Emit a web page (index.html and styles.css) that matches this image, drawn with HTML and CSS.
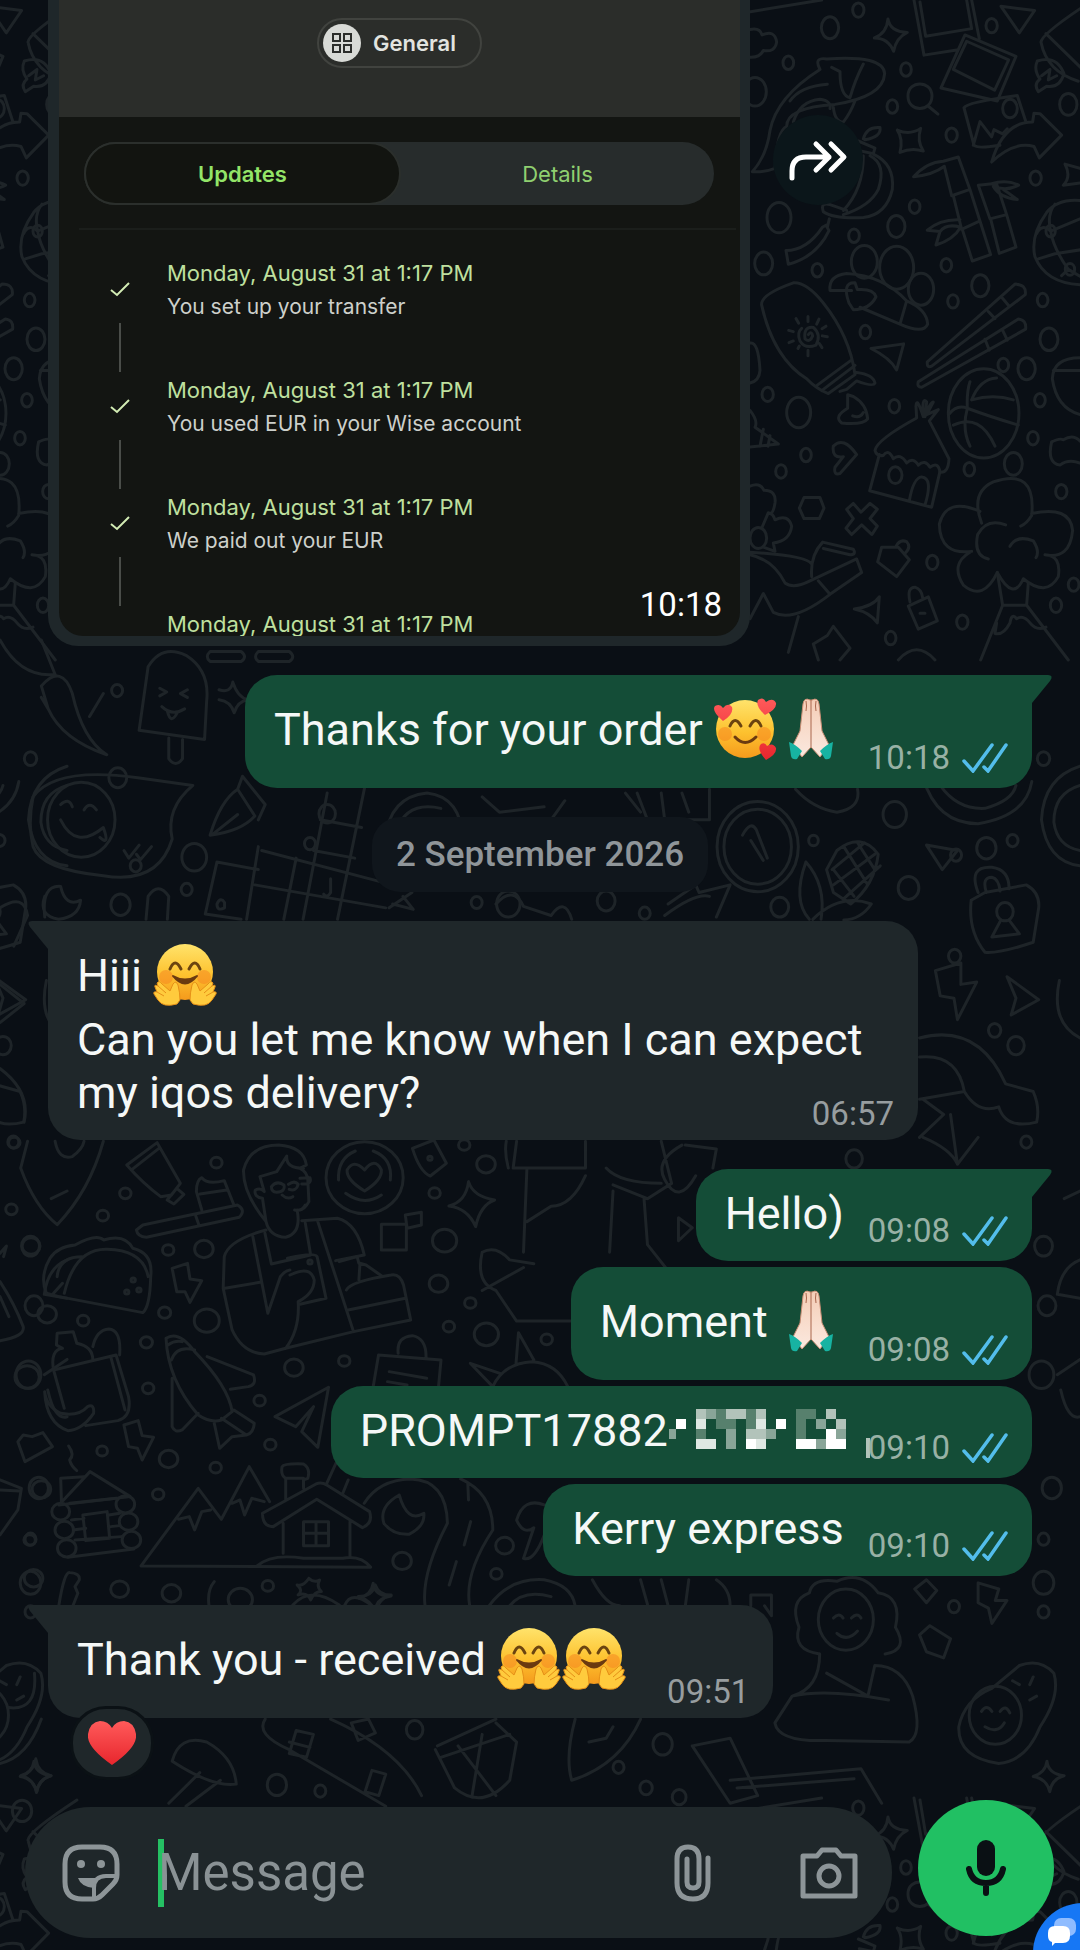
FILE: index.html
```html
<!DOCTYPE html>
<html lang="en">
<head>
  <meta charset="UTF-8">
  <title>Chat</title>
  <meta name="viewport" content="width=device-width, initial-scale=1.0">
  <link rel="stylesheet" href="styles.css">
</head>
<body>

  <!-- Wallpaper: one tile, repeated -->
  <svg class="wallpaper" aria-hidden="true">
    <defs>
      <g id="tile">
        <g transform="translate(740 0) scale(.3333 .4209)">
          <circle cx="355" cy="24" r="17"/><circle cx="270" cy="66" r="26"/><circle cx="145" cy="149" r="16"/><circle cx="45" cy="218" r="34"/>
          <circle cx="498" cy="165" r="16"/><circle cx="457" cy="253" r="16"/><circle cx="755" cy="61" r="17"/><circle cx="635" cy="321" r="17"/>
          <circle cx="985" cy="248" r="26"/><circle cx="887" cy="423" r="17"/><circle cx="524" cy="491" r="16"/><circle cx="469" cy="538" r="26"/>
          <circle cx="342" cy="560" r="16"/><circle cx="117" cy="517" r="36"/><circle cx="71" cy="626" r="27"/><circle cx="232" cy="642" r="16"/>
          <circle cx="373" cy="622" r="39"/><circle cx="470" cy="636" r="51"/><circle cx="543" cy="687" r="38"/><circle cx="619" cy="630" r="16"/>
          <circle cx="721" cy="679" r="26"/><circle cx="639" cy="716" r="16"/><circle cx="376" cy="789" r="16"/><circle cx="908" cy="713" r="16"/>
          <circle cx="927" cy="806" r="27"/><circle cx="860" cy="876" r="26"/><circle cx="790" cy="867" r="16"/><circle cx="900" cy="951" r="16"/>
          <circle cx="83" cy="937" r="17"/><circle cx="176" cy="980" r="36"/><circle cx="463" cy="965" r="16"/><circle cx="198" cy="1081" r="16"/>
          <circle cx="123" cy="1120" r="16"/><circle cx="466" cy="1129" r="20"/><circle cx="688" cy="1115" r="16"/><circle cx="820" cy="1102" r="27"/>
          <circle cx="879" cy="1041" r="16"/><circle cx="964" cy="1168" r="17"/><circle cx="577" cy="1336" r="17"/><circle cx="667" cy="1478" r="17"/>
          <circle cx="948" cy="1438" r="17"/><circle cx="1001" cy="1389" r="16"/><circle cx="452" cy="1516" r="16"/>
          <path d="M0 32L245 0M30 70Q60 65 66 83Q105 70 110 100Q105 125 70 120Q60 137 30 136"/>
          <path d="M444 45Q450 75 502 77Q468 90 461 122Q445 90 403 90Q440 80 444 45ZM783 15L884 25L838 78Z"/>
          <path d="M522 0L552 131L650 119M540 5L557 86L695 68L680 0M695 0L718 92M675 83L828 134L772 240L603 209ZM680 98L806 142L764 214L640 165Z"/>
          <path d="M672 256Q680 243 832 227L858 290M672 256L702 345Q710 354 780 345M700 345L720 289L755 325L762 308L788 318L802 306"/><circle cx="810" cy="258" r="22"/>
          <path d="M755 385Q790 290 878 290L882 269L900 270L965 321L898 375L882 348Q820 335 755 385Z"/>
          <path d="M903 100Q905 80 1050 5M918 80L1050 182M903 100Q920 170 1015 193M892 145Q950 130 972 175Q960 210 920 205L895 218Q880 200 900 188Q880 165 892 145M905 180L930 165L925 190L950 180"/>
          <path d="M504 228C504 190 575 190 576 228C575 268 504 268 504 228M566 253L594 271M472 309Q510 322 542 305Q530 335 550 359Q515 350 480 362Q490 330 472 309"/>
          <path d="M37 408Q80 370 90 310Q110 230 240 165Q220 135 260 140Q430 130 434 175Q430 230 285 248Q140 255 140 300Q110 310 105 400Q70 410 37 408M150 240Q180 205 262 200M275 160L300 170Q300 228 330 232Q345 190 370 152M280 255Q285 290 310 290Q330 270 345 240"/>
          <path d="M160 290Q180 240 240 236Q275 240 270 258M370 330Q380 300 420 303Q425 325 375 332M355 335L405 352L400 365L358 358M370 370Q370 450 310 500M390 370Q440 390 415 450Q390 490 310 510M400 366Q465 390 457 450Q440 510 370 517Q280 520 250 503Q240 480 270 486L320 500"/>
          <path d="M138 595Q200 595 247 540L258 535L267 548Q230 610 145 628ZM268 520L262 540"/>
          <path d="M521 420Q560 385 610 383L655 373L690 450L635 465L613 395Q580 415 521 420M690 450L720 525L665 545L640 465M720 525L752 605L697 620L667 545M562 547Q600 520 660 522M600 550Q620 530 662 540Q640 570 588 582L600 550L562 547"/>
          <path d="M715 440L750 437L770 437L800 510L750 520ZM800 510L828 587L778 602L752 520M752 437Q800 425 836 440Q800 455 760 443Q780 470 832 474Q800 455 790 450"/>
          <path d="M1050 480Q960 465 920 505Q870 560 885 610Q920 680 1050 677M945 485Q920 510 932 549Q940 590 985 640L1050 670M932 549Q905 530 890 555M932 549L1050 510M895 615L945 603M985 640L965 655M945 603L1050 590"/><circle cx="932" cy="549" r="14"/><circle cx="990" cy="640" r="14"/>
          <path d="M65 725Q60 700 160 672Q200 670 250 720Q330 800 345 890L265 935Q230 925 200 900Q100 850 65 725M232 915L335 855M245 928L345 868M350 885Q400 890 405 910Q400 920 350 905L320 925L300 930"/>
          <path d="M205 795Q215 785 218 798Q210 815 195 805Q190 775 220 778Q245 795 228 820Q195 830 180 810Q170 790 185 780M204 752V764M237 758L230 770M258 775L246 781M247 798L262 800M238 816L246 826M204 832V845M174 828L178 822M147 814L160 810M146 785L160 788M168 757L176 768"/>
          <path d="M335 690L270 690Q265 655 320 650Q430 655 500 715L480 770L360 730M500 715Q560 735 563 770Q550 795 480 770M327 720Q305 670 345 672L352 688Q400 685 408 705Q390 735 340 736ZM393 828L491 817L470 879Q450 850 393 828Z"/>
          <path d="M562 860L825 675Q860 675 856 700L575 870Q560 875 562 860M745 740L765 757M787 708L807 727M535 907L835 758Q860 760 857 782L545 920Q530 920 535 907M735 806L748 832M787 783L802 808"/>
          <circle cx="731" cy="982" r="106"/><path d="M690 907Q680 930 682 970Q665 1020 690 1060M682 970Q750 990 835 1010M695 950Q720 900 770 898M695 950Q760 935 820 950M626 985Q650 960 682 970M640 1010Q720 980 765 1060"/>
          <path d="M323 938L340 942Q380 960 383 995Q370 1010 305 1005Q280 990 323 970ZM338 988Q360 995 370 980M528 965Q530 940 550 990Q545 940 560 955L555 990Q570 955 580 955L560 985L595 973L568 1000L627 1090Q625 1125 600 1122Q595 1095 570 1110Q555 1090 535 1105Q520 1085 500 1100Q480 1075 460 1090Q445 1065 430 1082Q410 1085 405 1070Q410 1045 530 993Z"/>
          <path d="M418 1080L389 1166L575 1205L600 1120M508 1190Q520 1135 545 1133Q580 1135 555 1200M280 1060Q310 1035 350 1080L300 1125Q280 1130 285 1110L310 1085Q275 1090 280 1060M178 1207L192 1182L240 1182L252 1207L238 1232L192 1232Z"/>
          <path d="M320 1210L340 1196L363 1217L390 1196L412 1210L390 1232L412 1250L396 1270L365 1247L335 1270L318 1255L340 1232ZM425 1300L475 1300L508 1330L470 1370L413 1335ZM468 1298Q480 1280 500 1287Q515 1300 495 1315M343 1447Q400 1440 418 1418L412 1480Q390 1455 343 1447ZM505 1440L565 1418L592 1475L535 1495ZM510 1430Q500 1395 525 1395Q545 1400 548 1420M540 1457H555"/>
          <path d="M725 1243Q690 1170 760 1145Q890 1110 875 1225Q860 1245 842 1250M720 1215Q620 1180 598 1245Q600 1320 695 1310M875 1220Q990 1200 998 1260Q990 1330 915 1318M690 1312Q630 1340 670 1390Q730 1430 772 1360Q820 1430 850 1375Q920 1420 955 1370Q965 1320 915 1318M745 1328Q700 1320 713 1270Q740 1230 797 1247M810 1298Q830 1270 880 1285Q900 1310 888 1325"/>
          <path d="M772 1360L788 1438H860L865 1385M788 1438L722 1568M860 1438L985 1568M770 1480L765 1505Q790 1510 810 1480Q815 1455 830 1470Q850 1460 870 1480Q890 1500 918 1490"/>
          <path d="M30 815Q55 810 60 880Q58 905 30 910M30 975Q55 1000 45 1015L115 1055L30 1062M70 1020L60 1060M90 1035L84 1060M30 1155Q60 1145 72 1165Q110 1165 105 1195Q100 1220 90 1220M65 1255L85 1218Q100 1220 105 1235Q145 1220 155 1250Q150 1285 100 1290L105 1310L70 1300"/><circle cx="55" cy="1278" r="25"/>
          <path d="M30 1318Q100 1330 135 1385Q160 1400 210 1380L350 1328L365 1360L270 1412L235 1380M215 1340Q200 1320 30 1312M215 1370Q210 1320 248 1288L340 1305Q350 1318 330 1318L250 1303M270 1412Q160 1480 100 1455L70 1410L30 1470M175 1465L145 1550"/>
          <path d="M1020 850Q940 850 937 900Q950 970 1020 985M940 880H1020M935 1050Q960 1040 970 1045Q1000 1030 1020 1048M935 1050Q920 1100 960 1105Q985 1090 1020 1100M1020 400L975 390Q995 420 970 440L1020 435M220 1530L262 1510L280 1488L330 1540L300 1568M220 1530L235 1568M475 1568Q530 1520 585 1568"/>
        </g>

        <g transform="translate(0 640) scale(.6888 .7653)">
          <circle cx="170" cy="66" r="8"/><circle cx="171" cy="180" r="13"/><circle cx="282" cy="284" r="18"/><circle cx="197" cy="295" r="8"/><circle cx="271" cy="326" r="8"/>
          <circle cx="175" cy="346" r="14"/><circle cx="475" cy="227" r="12"/><circle cx="450" cy="266" r="8"/><circle cx="692" cy="343" r="8"/><circle cx="738" cy="345" r="17"/>
          <circle cx="880" cy="341" r="13"/><circle cx="936" cy="357" r="8"/><circle cx="1132" cy="349" r="13"/><circle cx="1181" cy="262" r="7"/><circle cx="1299" cy="228" r="17"/>
          <circle cx="1388" cy="281" r="8"/><circle cx="1432" cy="272" r="14"/><circle cx="1470" cy="262" r="8"/><circle cx="1319" cy="324" r="15"/><circle cx="1386" cy="413" r="9"/>
          <circle cx="1515" cy="155" r="9"/><circle cx="1444" cy="510" r="9"/><circle cx="1475" cy="530" r="12"/><circle cx="1240" cy="678" r="12"/><circle cx="1515" cy="792" r="13"/>
          <circle cx="1490" cy="656" r="8"/><circle cx="1520" cy="870" r="13"/><circle cx="1512" cy="960" r="18"/><circle cx="1527" cy="1108" r="14"/><circle cx="1515" cy="1175" r="8"/>
          <circle cx="1515" cy="1232" r="15"/><circle cx="1385" cy="1263" r="8"/><circle cx="1515" cy="1270" r="8"/><circle cx="962" cy="1443" r="14"/><circle cx="898" cy="1473" r="8"/>
          <circle cx="938" cy="1500" r="9"/><circle cx="402" cy="1496" r="14"/><circle cx="465" cy="1504" r="8"/><circle cx="602" cy="1424" r="12"/><circle cx="986" cy="1512" r="10"/><circle cx="32" cy="1530" r="14"/>
          <path d="M202 118L215 35Q235 5 270 20Q305 40 300 80L297 130L202 118M245 128V155Q255 168 265 155V130M232 63L242 68L232 73M272 65L262 70L272 75M235 87Q250 100 268 90M243 93Q248 112 258 94"/>
          <path d="M60 60Q90 30 105 70Q120 130 155 150Q90 130 70 90ZM70 90L60 75M150 70L130 100M318 65Q335 70 338 55Q345 75 360 78Q345 80 340 95Q335 80 318 78M305 15H350Q360 22 350 28H305Q297 22 305 15M375 15H420Q430 22 420 28H375Q367 22 375 15M0 0Q30 50 80 45L60 0"/>
          <path d="M48 205Q80 165 200 180L280 190Q240 220 250 260Q230 320 150 308Q60 300 48 270Q40 240 48 205"/><circle cx="118" cy="235" r="49"/><path d="M88 215Q100 205 105 218M122 222Q130 210 140 222M88 235Q110 275 150 245Q160 270 145 258M180 275L187 285L202 268M198 280L204 287L220 270"/>
          <path d="M305 255Q320 210 345 195L370 230Q350 250 305 255M310 253L345 228M345 195L352 178L385 215L375 235M560 260Q565 205 620 200Q670 205 672 262M575 250Q590 210 640 220M700 205L725 225L790 218M730 235H800L820 210"/>
          <path d="M475 200L440 365M530 190L490 365M465 235L525 245M455 275L515 285M380 275L570 320M370 320L560 350M315 290L375 300M315 290L298 358L350 365M375 270L358 365M430 285L412 365M315 345Q320 335 326 343V350Q315 355 315 345M480 312V330Q475 338 470 332M565 350L598 330M570 345L600 352L585 335"/>
          <path d="M65 335Q55 360 85 365Q115 362 117 340Q95 350 88 322Q60 320 65 362M212 365L215 335Q230 315 245 335L243 365M0 350Q35 330 40 360L20 400M0 450L35 475L0 500M0 560Q45 590 35 630M720 345Q745 320 760 348L800 360Q820 335 830 365M970 345L1010 320L1015 330L1060 320L1040 362M965 360Q1010 330 1030 335"/>
          <circle cx="1100" cy="270" r="59"/><circle cx="1100" cy="270" r="49"/><path d="M1078 255Q1090 235 1098 248L1114 285M1090 262L1108 288M908 200L930 225M925 200L940 235H1030V195M960 200L965 235M990 200L1000 225M1155 195Q1180 220 1215 225Q1250 220 1245 195M1340 180Q1360 240 1420 240Q1490 230 1498 185M1365 190Q1390 222 1430 220Q1470 210 1475 190"/>
          <path d="M1215 275Q1250 250 1275 280Q1270 320 1235 345L1210 330L1200 300ZM1225 270L1260 320M1245 265L1270 300M1210 300L1240 335M1270 280L1210 320M1255 265L1208 300M1278 295L1225 338M1170 290Q1200 320 1192 365M1170 290Q1150 340 1175 365M1180 365Q1220 330 1265 345Q1250 365 1225 366M1345 268L1390 275L1368 300Z"/>
          <path d="M1410 340L1430 330L1490 320Q1510 330 1508 350L1500 395Q1450 410 1430 408Q1405 380 1410 340M1420 330Q1405 295 1440 297Q1465 300 1465 325M1432 330Q1425 310 1440 310Q1450 312 1452 328"/><circle cx="1459" cy="355" r="12"/><path d="M1453 366L1440 388L1480 384L1465 366M1568 165Q1515 180 1512 235Q1520 290 1568 295M1568 190Q1530 200 1530 238Q1535 270 1568 275"/>
          <path d="M1358 432L1395 422V450L1418 447L1390 496L1385 468L1365 465ZM1462 440L1508 470L1468 490L1475 468ZM1538 445Q1525 500 1568 520M1335 520Q1420 500 1460 580L1500 590Q1510 610 1505 630Q1460 640 1450 610Q1420 620 1400 590L1335 600M1335 545Q1390 540 1400 590M1340 600L1370 620L1335 650M1380 620L1390 685L1420 650M1340 650Q1380 665 1390 685"/>
          <path d="M40 655L30 690Q50 740 83 764Q130 720 150 655M80 655Q85 680 105 675Q120 665 122 655M750 655L745 690H850L850 655M765 690L760 800M850 700Q830 740 800 740L765 760M700 800Q720 790 740 810L775 815M700 800Q690 840 720 850L750 890H828M760 820L700 850M880 690Q900 710 960 710M960 655L975 710L940 730L890 712M890 720L885 800M935 730L940 790L975 830M990 660Q950 680 965 705Q985 740 1010 700M995 660L1040 665L1035 690M985 755L1005 768L985 785ZM1545 730L1568 720"/>
          <path d="M1535 855Q1540 820 1568 810M1535 855L1568 860M1535 960L1568 940M1540 980Q1550 1020 1568 1015M735 655Q732 670 738 690"/>
          <path d="M500 1262Q510 1240 540 1262M545 1235Q540 1250 520 1250Q540 1255 545 1270Q550 1252 568 1248Q550 1248 545 1235M710 1262Q740 1225 790 1228Q830 1235 835 1262M740 1262Q760 1240 800 1250M790 1130Q760 1120 750 1150Q760 1170 775 1160L760 1200Q775 1205 790 1170M860 1228Q880 1262 900 1262M930 1228L940 1260M960 1228L970 1262M1000 1228L995 1262M1040 1228Q1060 1240 1060 1262M1090 1262V1248H1120V1275L1110 1262M838 915L850 950M1328 1240L1345 1228L1360 1242L1345 1258Z"/>
          <path d="M1160 1290Q1145 1255 1175 1245Q1180 1225 1215 1230Q1250 1215 1275 1245Q1310 1250 1300 1290Q1320 1320 1285 1325M1160 1290Q1150 1320 1190 1325"/><circle cx="1228" cy="1280" r="40"/><path d="M1210 1278Q1218 1270 1224 1278M1236 1278Q1245 1270 1250 1278M1215 1298Q1230 1310 1245 1295M1190 1325Q1190 1370 1150 1380L1125 1415Q1130 1440 1200 1438L1320 1440Q1340 1430 1325 1380Q1310 1340 1270 1340L1260 1380L1200 1350M1150 1380Q1200 1370 1290 1385"/>
          <path d="M1420 1232L1450 1240L1445 1255H1462L1440 1285L1435 1265L1420 1258ZM1335 1300L1350 1288L1380 1305L1370 1330L1345 1322ZM1480 1340Q1510 1330 1530 1350Q1540 1380 1510 1420Q1490 1465 1450 1468Q1390 1460 1392 1420Q1400 1385 1440 1370Z"/><circle cx="1445" cy="1405" r="38"/><path d="M1425 1400Q1432 1390 1440 1400M1452 1400Q1460 1390 1466 1402M1430 1420Q1448 1430 1458 1415M1470 1360L1480 1365M1500 1355L1495 1365M1505 1380L1495 1385"/>
          <path d="M1005 1445L1060 1435L1100 1510L1060 1520ZM1060 1490L1250 1475L1280 1520M1070 1500L1240 1488M1520 1465Q1522 1482 1545 1484Q1527 1488 1524 1505Q1520 1488 1500 1485Q1518 1480 1520 1465M52 1462Q55 1480 74 1484Q57 1488 53 1506Q48 1487 30 1484Q48 1480 52 1462M12 1395Q55 1400 50 1350M0 1468Q40 1460 60 1410"/>
          <path d="M250 1465Q260 1430 300 1440Q340 1460 343 1495Q310 1500 250 1465M290 1480L245 1520M320 1490L270 1524M385 1410Q370 1430 420 1450L560 1524M480 1410Q580 1450 612 1510M430 1425L455 1430L445 1460L420 1455ZM420 1440L450 1447M540 1477L560 1482L550 1510L530 1505ZM510 1415L535 1410L545 1428L520 1438ZM635 1445L720 1410M632 1450L660 1500Q700 1530 740 1490L750 1440L720 1415M640 1460L740 1430M665 1445L720 1510M700 1430L685 1512M835 1410Q820 1460 830 1490Q900 1470 930 1410M855 1440L880 1435L890 1420"/>
        </g>

        <g transform="translate(0 1130) scale(.3571 .3333)">
          <circle cx="40" cy="38" r="16"/><circle cx="32" cy="238" r="16"/><circle cx="351" cy="190" r="16"/><circle cx="606" cy="98" r="16"/><circle cx="288" cy="257" r="16"/><circle cx="87" cy="348" r="25"/>
          <circle cx="471" cy="360" r="16"/><circle cx="571" cy="357" r="26"/><circle cx="132" cy="553" r="26"/><circle cx="233" cy="572" r="16"/><circle cx="461" cy="548" r="17"/><circle cx="579" cy="572" r="35"/>
          <circle cx="410" cy="637" r="17"/><circle cx="76" cy="741" r="34"/><circle cx="823" cy="713" r="26"/><circle cx="964" cy="693" r="16"/><circle cx="415" cy="775" r="16"/><circle cx="727" cy="812" r="16"/>
          <circle cx="286" cy="963" r="15"/><circle cx="472" cy="987" r="26"/><circle cx="757" cy="944" r="16"/><circle cx="604" cy="1013" r="16"/><circle cx="116" cy="1078" r="26"/><circle cx="443" cy="1093" r="16"/>
          <circle cx="83" cy="1230" r="16"/><circle cx="94" cy="1345" r="26"/><circle cx="335" cy="1378" r="25"/><circle cx="480" cy="1390" r="26"/><circle cx="750" cy="1368" r="16"/><circle cx="673" cy="1409" r="34"/>
          <circle cx="1300" cy="45" r="16"/><circle cx="1361" cy="103" r="26"/><circle cx="1217" cy="189" r="16"/><circle cx="1245" cy="332" r="34"/><circle cx="1228" cy="461" r="26"/><circle cx="1317" cy="519" r="16"/>
          <circle cx="1257" cy="590" r="16"/><circle cx="1362" cy="613" r="34"/><circle cx="1531" cy="628" r="16"/><circle cx="1126" cy="1293" r="26"/><circle cx="1413" cy="1247" r="25"/><circle cx="1390" cy="1332" r="16"/>
          <path d="M355 105L440 38L505 160L480 195L450 200Q400 160 355 105M370 118L445 55M468 210L495 175L515 193L487 222ZM382 300L400 285L665 225Q690 240 670 262L410 322Q385 320 382 300M548 257L558 288M565 240L550 185Q550 150 565 143Q580 165 628 152L655 225M560 192L635 180"/>
          <path d="M745 275Q680 190 682 120Q700 45 780 45Q850 50 858 105L840 115Q860 125 862 150L865 215Q850 245 832 240Q845 310 800 322Q755 320 745 275L735 205M735 205Q710 200 715 180Q730 172 740 185L728 140L775 125L803 78Q800 115 850 115M760 170Q775 150 795 165Q800 185 775 187Q760 185 760 170M808 163Q825 150 835 163Q830 185 810 178M840 145L868 143Q875 165 845 162M790 195Q805 210 820 200M825 240Q845 245 855 225"/>
          <path d="M745 300Q640 330 628 380L625 475L650 600Q680 670 740 672L800 655L990 605L890 275M845 272L945 265Q1000 280 1020 375L940 392M630 475L728 457M708 320L750 550L785 440Q800 420 812 420M742 310L760 402L870 375L855 280M805 385Q880 365 888 380L913 505L840 523M812 435Q870 405 880 450Q880 490 835 515Q840 600 800 655"/><circle cx="868" cy="396" r="6"/>
          <path d="M970 480Q980 455 1095 435Q1120 430 1130 465L1150 570L990 605M975 540L1135 505M1005 450L1008 400L1025 405L1068 437M950 395L1000 380L1005 400M1068 283H1138V360H1068ZM1135 255L1180 247V285L1140 295Z"/>
          <circle cx="1021" cy="143" r="108"/><path d="M1021 183Q970 150 972 120Q990 85 1021 120Q1050 80 1068 120Q1070 150 1021 183M948 150Q945 85 995 63M1045 63Q1100 85 1093 150M968 190Q1020 230 1068 195M1155 55L1215 30L1250 100L1205 138Q1175 125 1155 55M1312 155Q1325 200 1385 210Q1345 225 1332 290Q1310 235 1257 228Q1305 215 1312 155"/><circle cx="1204" cy="85" r="6"/>
          <path d="M130 490Q110 440 140 385Q160 350 210 345Q270 310 290 330Q350 310 372 355Q430 370 422 440Q420 530 400 548L165 500ZM180 490Q210 355 300 358Q400 360 415 440M160 440Q165 380 230 380M150 490L175 460"/><circle cx="373" cy="450" r="6"/><circle cx="355" cy="486" r="6"/><circle cx="389" cy="480" r="6"/>
          <path d="M482 415L525 400L532 447L565 452L532 517L518 485H495ZM347 885L387 872L398 917L430 922L398 990L385 955L360 950ZM150 720L325 675L360 800Q370 860 330 872L240 887M150 720L180 835M150 720Q140 660 175 655L158 645L160 610L205 605L215 640Q260 650 260 690M260 650Q270 600 305 597Q340 600 335 675M310 680L350 840M125 785Q130 830 170 850Q220 860 245 830Q265 820 262 850Q230 900 190 902Q130 880 125 785"/>
          <path d="M465 625Q500 600 545 665Q640 770 650 845L620 870Q590 880 555 855Q470 750 465 625M480 690Q495 645 545 660M470 645Q490 630 510 635M580 680L710 735Q720 765 695 770L645 778M482 745V890Q490 910 510 900L555 850M600 880L615 955L650 920L690 915L620 865M655 840L712 880Q710 910 690 915M770 860L920 772L890 952L845 905L878 830L828 890Z"/>
          <path d="M50 935L65 915L90 920L120 908L147 950L70 995ZM192 948Q210 975 195 990Q200 1010 215 1022M165 1125L252 1025L365 1100ZM172 1115L170 1045L235 1040"/><circle cx="170" cy="1145" r="25"/><circle cx="180" cy="1200" r="26"/><circle cx="187" cy="1255" r="26"/><circle cx="351" cy="1123" r="26"/><circle cx="360" cy="1175" r="26"/><circle cx="368" cy="1230" r="26"/><path d="M195 1120L325 1105M200 1170L235 1165M205 1200L240 1195M210 1230L340 1220M190 1282L375 1257M305 1155L335 1150M310 1190L335 1187M232 1155L300 1145L307 1225L240 1232Z"/>
          <path d="M395 1308L555 1075L620 1168L698 1010L755 1115M395 1308L1038 1312Q1010 1275 960 1285H850Q760 1270 720 1308M500 1168L530 1160L545 1200L565 1145L590 1140M650 1120L672 1110L685 1155L705 1105L740 1115M735 1150L885 1062Q900 1055 915 1065L1035 1145Q1045 1180 1015 1193L887 1108L765 1190Q735 1190 735 1150ZM793 1180V1270M980 1175V1280M850 1175H920V1247H850ZM885 1175V1247M850 1210H920M800 1110V1045Q785 1035 790 1010Q795 1000 850 1002Q870 1015 862 1045L850 1050V1075M800 1045H850"/>
          <path d="M1118 1095Q1060 1130 1075 1180Q1100 1215 1145 1213Q1190 1190 1187 1150Q1140 1180 1118 1095M1045 770L1060 675L1235 690L1228 770M1115 670Q1110 620 1155 617Q1195 625 1193 685M1090 725L1195 745M1085 755L1140 765M915 1060L945 990M960 1090L975 1050M1020 1120Q1060 1050 1150 1047Q1250 1050 1253 1180Q1180 1330 1190 1425M1290 1047Q1380 1090 1380 1200Q1300 1330 1315 1425M1310 1060L1312 1110M1318 1175L1300 1245M1278 1295L1258 1365M165 1425Q180 1325 195 1328Q225 1330 222 1350L210 1370L218 1390L205 1425M585 1425Q580 1380 600 1355M820 1425Q870 1365 950 1425M865 1345Q850 1370 832 1365Q850 1380 835 1395Q860 1385 870 1410Q880 1385 900 1385Q885 1370 895 1350Q880 1360 865 1345M1045 1360Q1050 1400 1095 1398Q1060 1405 1055 1425M1045 1360Q1040 1395 1005 1405"/>
          <path d="M0 455Q40 520 65 590Q70 620 0 632M0 500L25 560M0 1050L60 1075L50 1140L0 1215M0 1080L55 1083M0 370L18 348L10 380M1380 770Q1410 700 1490 695Q1560 700 1590 770M1445 700L1452 608L1495 690M1400 730L1317 700L1380 770"/>
        </g>
      </g>
    </defs>
    <use href="#tile"/>
    <use href="#tile" x="-1013"/>
    <use href="#tile" y="1798"/>
    <use href="#tile" x="-1013" y="1798"/>
  </svg>

  <!-- Emoji and icons -->
  <svg class="sprite" aria-hidden="true">
    <defs>
      <linearGradient id="skin" x1="0" y1="0" x2="0" y2="1">
        <stop offset="0" stop-color="#ffe36b"/><stop offset=".55" stop-color="#fdc22f"/><stop offset="1" stop-color="#f59a1c"/>
      </linearGradient>
      <linearGradient id="palm" x1="0" y1="0" x2="0" y2="1">
        <stop offset="0" stop-color="#f5cdb6"/><stop offset="1" stop-color="#fbe9df"/>
      </linearGradient>
      <linearGradient id="red" x1="0" y1="0" x2="0" y2="1">
        <stop offset="0" stop-color="#ff5a5a"/><stop offset="1" stop-color="#e8262d"/>
      </linearGradient>
    </defs>
    <symbol id="hug" viewBox="0 0 64 64">
      <circle cx="32" cy="29" r="28" fill="url(#skin)"/>
      <circle cx="13" cy="34" r="7" fill="#f58220" opacity=".5"/><circle cx="51" cy="34" r="7" fill="#f58220" opacity=".5"/>
      <path d="M17 26Q22 14 28 26M36 26Q42 14 47 26" fill="none" stroke="#6b4410" stroke-width="3" stroke-linecap="round"/>
      <path d="M20 33Q32 48 44 33Q32 40 20 33Z" fill="#6b3a10" stroke="#6b3a10" stroke-width="2" stroke-linejoin="round"/>
      <path d="M24 61Q10 65 5 57L1 51Q0 48 4 49L2 44Q1 41 5 43L4 40Q6 37 9 41L17 48L20 41Q23 37 25 42Q27 50 27 57Z" fill="#ffcb3d" stroke="#e58f17" stroke-width="1"/>
      <path d="M40 61Q54 65 59 57L63 51Q64 48 60 49L62 44Q63 41 59 43L60 40Q58 37 55 41L47 48L44 41Q41 37 39 42Q37 50 37 57Z" fill="#ffcb3d" stroke="#e58f17" stroke-width="1"/>
      <path d="M4 49L11 53M5 43L13 50M60 49L53 53M59 43L51 50" stroke="#e58f17" stroke-width="1"/>
    </symbol>
    <symbol id="adore" viewBox="0 0 64 64">
      <circle cx="31" cy="32" r="29" fill="url(#skin)"/>
      <circle cx="11" cy="37" r="7" fill="#f58220" opacity=".5"/><circle cx="50" cy="37" r="7" fill="#f58220" opacity=".5"/>
      <path d="M16 29Q21 18 27 29M36 29Q42 18 47 29" fill="none" stroke="#6b4410" stroke-width="3" stroke-linecap="round"/>
      <path d="M21 40Q31 51 42 40" fill="none" stroke="#6b3a10" stroke-width="3" stroke-linecap="round"/>
      <path d="M9 24Q-3 14 1 9Q6 6 9 11Q14 5 18 10Q20 17 9 24ZM51 18Q41 9 44 3Q49 -1 52 5Q59 0 62 6Q63 12 51 18ZM52 63Q42 52 47 47Q51 45 53 49Q59 45 62 51Q63 57 52 63Z" fill="url(#red)"/>
    </symbol>
    <symbol id="pray" viewBox="0 0 64 64">
      <path d="M31 3Q25 0 24 7L21 34L14 48L23 60L32 50L41 60L50 48L43 34L40 7Q39 0 33 3Z" fill="url(#palm)" stroke="#c98e75" stroke-width="1"/>
      <path d="M32 3V50M27 4Q28 9 27 14M37 4Q36 9 37 14" fill="none" stroke="#a9664c" stroke-width="1"/>
      <path d="M10 45Q16 47 23 54L18 62Q13 63 12 59ZM54 45Q48 47 41 54L46 62Q51 63 52 59Z" fill="#17b3a2"/>
    </symbol>
    <symbol id="heart" viewBox="0 0 48 44">
      <path d="M24 44Q-2 26 0 13Q2 1 12 0Q20 0 24 7Q28 0 36 0Q46 1 48 13Q50 26 24 44Z" fill="url(#red)"/>
    </symbol>
    <symbol id="ticks" viewBox="0 0 46 30">
      <path d="M2 18L11 28L30 2M22 24L26 28L44 2" fill="none" stroke="#53bdeb" stroke-width="3.5" stroke-linecap="round"/>
    </symbol>
    <symbol id="check" viewBox="0 0 22 16">
      <path d="M2 9L8 14L20 2" fill="none" stroke="#d3ecb4" stroke-width="2"/>
    </symbol>
  </svg>

  <main class="chat">
    <div class="row">
      <figure class="bubble in media">
        <div class="photo">
          <div class="photo-head">
            <span class="category">
              <span class="category-icon">
                <svg width="20" height="20" viewBox="0 0 20 20" fill="none" stroke="#2b2d2a" stroke-width="2"><path d="M1 1H8V8H1ZM12 1H19V8H12ZM1 12H8V19H1ZM12 12H19V19H12Z"/></svg>
              </span>
              General
            </span>
          </div>
          <div class="tabs">
            <button type="button" class="tab active">Updates</button>
            <button type="button" class="tab">Details</button>
          </div>
          <ol class="timeline">
            <li><svg class="check"><use href="#check"/></svg><p class="date">Monday, August 31 at 1:17 PM</p><p>You set up your transfer</p></li>
            <li><svg class="check"><use href="#check"/></svg><p class="date">Monday, August 31 at 1:17 PM</p><p>You used EUR in your Wise account</p></li>
            <li><svg class="check"><use href="#check"/></svg><p class="date">Monday, August 31 at 1:17 PM</p><p>We paid out your EUR</p></li>
            <li><p class="date">Monday, August 31 at 1:17 PM</p></li>
          </ol>
          <time class="photo-time">10:18</time>
        </div>
      </figure>
      <button type="button" class="forward" aria-label="Forward">
        <svg width="62" height="44" viewBox="0 0 62 44" fill="none" stroke="#fff" stroke-width="5" stroke-linecap="round" stroke-linejoin="round"><path d="M5 40V33Q5 19 19 19H42M29 6L42 19L29 32M44 6L57 19L44 32"/></svg>
      </button>
    </div>

    <div class="bubble out tail">
      <p>Thanks for your order <svg class="emoji"><use href="#adore"/></svg><svg class="emoji"><use href="#pray"/></svg></p>
      <span class="meta"><time>10:18</time><svg class="ticks"><use href="#ticks"/></svg></span>
    </div>

    <div class="day">2 September 2026</div>

    <div class="bubble in tail long">
      <p>Hiii <svg class="emoji"><use href="#hug"/></svg><br>Can you let me know when I can expect my iqos delivery?</p>
      <span class="meta"><time>06:57</time></span>
    </div>

    <div class="group">
      <div class="bubble out tail">
        <p>Hello)</p>
        <span class="meta"><time>09:08</time><svg class="ticks"><use href="#ticks"/></svg></span>
      </div>
      <div class="bubble out">
        <p>Moment <svg class="emoji"><use href="#pray"/></svg></p>
        <span class="meta"><time>09:08</time><svg class="ticks"><use href="#ticks"/></svg></span>
      </div>
      <div class="bubble out">
        <p>PROMPT17882<svg class="mosaic" viewBox="0 0 202 50" shape-rendering="crispEdges">
          <path fill="#fff" d="M8 10h10v10h-10zM108 10h10v10h-10zM78 30h10v10h-10zM128 30h20v10h-20zM158 20h10v20h-10zM168 30h10v10h-10z"/>
          <path fill="#dfe8e3" d="M28 10h10v10h-10zM88 10h10v10h-10zM28 30h20v10h-20zM88 30h10v10h-10z"/>
          <path fill="#b2c3ba" d="M28 0h10v10h-10zM58 0h20v10h-20zM88 0h10v10h-10zM78 20h20v10h-20zM158 0h10v10h-10zM168 10h10v10h-10zM198 29h4v20h-4z"/>
          <path fill="#89a598" d="M38 0h10v10h-10zM58 20h10v20h-10zM98 20h10v10h-10zM148 10h10v10h-10zM148 30h10v10h-10zM1 20h7v10h-7zM168 20h10v10h-10z"/>
          <path fill="#57806d" d="M48 0h10v10h-10zM78 0h10v10h-10zM48 10h10v10h-10zM58 10h10v10h-10zM78 10h10v10h-10zM128 0h20v10h-20zM128 10h10v20h-10zM28 20h10v10h-10z"/>
        </svg></p>
        <span class="meta"><time>09:10</time><svg class="ticks"><use href="#ticks"/></svg></span>
      </div>
      <div class="bubble out">
        <p>Kerry express</p>
        <span class="meta"><time>09:10</time><svg class="ticks"><use href="#ticks"/></svg></span>
      </div>
    </div>

    <div class="bubble in tail wide">
      <p>Thank you - received <svg class="emoji"><use href="#hug"/></svg><svg class="emoji"><use href="#hug"/></svg></p>
      <span class="meta"><time>09:51</time></span>
      <span class="reaction"><svg width="48" height="44"><use href="#heart"/></svg></span>
    </div>
  </main>

  <!-- Message box -->
  <form class="composer">
    <div class="field">
      <button type="button" aria-label="Stickers">
        <svg width="58" height="58" viewBox="0 0 58 58" fill="none" stroke="#8d9598" stroke-width="5"><path d="M20 3H38Q55 3 55 20V31Q55 36 51 40L40 51Q36 55 31 55H20Q3 55 3 38V20Q3 3 20 3Z"/><path d="M55 32H44Q32 32 32 44V55" stroke-width="4"/><circle cx="19" cy="20" r="4" fill="#8d9598" stroke="none"/><circle cx="39" cy="20" r="4" fill="#8d9598" stroke="none"/><path d="M16 34H38Q32 38 32 44Q19 43 16 34Z" fill="#8d9598" stroke="none"/></svg>
      </button>
      <span class="caret"></span>
      <input type="text" placeholder="Message" aria-label="Message">
      <button type="button" aria-label="Attach">
        <svg width="38" height="58" viewBox="0 0 38 58" fill="none" stroke="#8d9598" stroke-width="5" stroke-linecap="round"><path d="M34 14V39Q34 55 19 55Q3 55 3 39V15Q3 3 14 3Q25 3 25 15V38Q25 44 19 44Q13 44 13 38V15"/></svg>
      </button>
      <button type="button" aria-label="Camera">
        <svg width="58" height="52" viewBox="0 0 58 52" fill="none" stroke="#8d9598" stroke-width="5" stroke-linejoin="round"><path d="M3 9H17L22 3H36L41 9H55V49H3Z"/><circle cx="29" cy="29" r="10"/></svg>
      </button>
    </div>
    <button type="button" class="mic" aria-label="Voice message">
      <svg width="40" height="56" viewBox="0 0 40 56"><rect x="11" y="0" width="18" height="36" rx="9" fill="#0a1014"/><path d="M3 29Q6 43 20 43Q34 43 37 29M20 43V53" fill="none" stroke="#0a1014" stroke-width="6" stroke-linecap="round"/></svg>
    </button>
  </form>

  <!-- Support chat launcher -->
  <button type="button" class="launcher" aria-label="Support chat">
    <svg width="28" height="28" viewBox="0 0 28 28"><rect x="6" y="0" width="22" height="18" rx="7" fill="#8fbcff"/><path d="M7 8H15Q22 8 22 15V18Q22 25 15 25H7L4 28V24Q0 23 0 18V15Q0 8 7 8Z" fill="#fff"/></svg>
  </button>

</body>
</html>
```
FILE: styles.css
```css
* {
  box-sizing: border-box;
}

body {
  font-family: Roboto, sans-serif;
  background: #0a0f15;
  color: #f5f8f7;
  margin: 0;
  min-height: 100vh;
  position: relative;
  overflow-x: hidden;
  display: flex;
  flex-direction: column;
}

p, ol, figure {
  margin: 0;
  padding: 0;
}

button {
  font-family: inherit;
  background: none;
  border: none;
  padding: 0;
  color: inherit;
  cursor: pointer;
}

svg {
  display: block;
}

/* Wallpaper behind everything */
.wallpaper {
  position: absolute;
  top: 0;
  left: 0;
  width: 100%;
  height: 100%;
  z-index: -1;
  fill: none;
  stroke: #1e2428;
  stroke-width: 3px;
  stroke-linejoin: round;
  stroke-linecap: round;
}

.wallpaper path,
.wallpaper circle {
  vector-effect: non-scaling-stroke;
}

.sprite {
  position: absolute;
  width: 0;
  height: 0;
}

.chat {
  flex: 1;
  display: flex;
  flex-direction: column;
  gap: 29px;
  padding: 0 48px;
}

.group {
  display: flex;
  flex-direction: column;
  gap: 6px;
}

.row {
  display: flex;
  align-items: flex-start;
  gap: 23px;
}

/* Bubbles */
.bubble {
  position: relative;
  display: flex;
  align-items: flex-end;
  gap: 24px;
  padding: 18px 24px 21px 29px;
  border-radius: 32px;
  font-size: 45px;
  line-height: 53px;
}

.in {
  align-self: flex-start;
  background: #1f272a;
}

.out {
  align-self: flex-end;
  background: #144d37;
}

.tail.in {
  border-top-left-radius: 0;
}

.tail.out {
  border-top-right-radius: 0;
}

.tail::before {
  content: "";
  position: absolute;
  top: 0;
  width: 20px;
  height: 28px;
  background: inherit;
}

.tail.in::before {
  right: 100%;
  clip-path: path("M20 0H4Q-2 0 2 6L20 28Z");
}

.tail.out::before {
  left: 100%;
  clip-path: path("M0 0H16Q22 0 18 6L0 28Z");
}

.meta {
  display: flex;
  align-items: center;
  gap: 12px;
  margin-bottom: -11px;
  font-size: 33px;
  line-height: 40px;
  color: #98b1a5;
}

.in .meta {
  margin-bottom: -15px;
  color: #979d9f;
}

.ticks {
  width: 46px;
  height: 30px;
}

.emoji {
  display: inline-block;
  width: 64px;
  height: 64px;
  margin: 4px 1px 6px 0;
  vertical-align: -22px;
}

.mosaic {
  display: inline-block;
  width: 202px;
  height: 50px;
  margin: 0 -26px -13px 0;
  vertical-align: baseline;
}

.long {
  max-width: 870px;
  flex-direction: column;
  gap: 0;
}

/* Time sits beside the last, shorter line */
.long .meta {
  margin-top: -25px;
}

.wide {
  gap: 40px;
}

/* Shared picture */
.media {
  padding: 0 10px 10px 11px;
  border-radius: 0 0 30px 30px;
}

.photo {
  position: relative;
  width: 681px;
  height: 636px;
  overflow: hidden;
  border-radius: 0 0 24px 24px;
  background: #131512;
  font-family: Inter, sans-serif;
  font-size: 21px;
  line-height: 34px;
  color: #cdd0cb;
}

.photo-head {
  display: flex;
  justify-content: center;
  align-items: flex-start;
  height: 117px;
  padding-top: 18px;
  background: #2b2d2a;
}

.category {
  display: flex;
  align-items: center;
  gap: 12px;
  height: 50px;
  padding: 0 24px 0 4px;
  border: 2px solid #41433f;
  border-radius: 25px;
  font-size: 22px;
  font-weight: 600;
  color: #e2e4e0;
}

.category-icon {
  display: flex;
  align-items: center;
  justify-content: center;
  width: 38px;
  height: 38px;
  border-radius: 50%;
  background: #d8dad6;
}

.tabs {
  display: flex;
  margin: 25px 26px 23px 25px;
  border-radius: 32px;
  background: #272c2c;
}

.tab {
  flex: 1;
  height: 63px;
  font-size: 22px;
  color: #8fd070;
}

.tab.active {
  border: 2px solid #2b2f2c;
  border-radius: 32px;
  background: #121410;
  font-weight: 600;
  color: #93e568;
}

.timeline {
  list-style: none;
  margin: 0 4px 0 20px;
  padding-top: 26px;
  border-top: 2px solid #1b1e1b;
}

.timeline li {
  position: relative;
  height: 117px;
  padding-left: 88px;
}

/* Line that joins one step to the next */
.timeline li::after {
  content: "";
  position: absolute;
  left: 40px;
  top: 67px;
  width: 2px;
  height: 49px;
  background: #4a4d49;
}

.check {
  position: absolute;
  left: 30px;
  top: 25px;
  width: 22px;
  height: 16px;
}

.date {
  font-size: 22px;
  color: #bfe09f;
}

.photo-time {
  position: absolute;
  right: 18px;
  bottom: 11px;
  font-family: Roboto, sans-serif;
  font-size: 33px;
  line-height: 40px;
  color: #fff;
}

.forward {
  display: flex;
  align-items: center;
  justify-content: center;
  width: 90px;
  height: 90px;
  margin-top: 115px;
  border-radius: 50%;
  background: #0b161a;
}

.day {
  align-self: center;
  padding: 18px 24px 17px;
  border-radius: 28px;
  background: #10161c;
  font-size: 35px;
  font-weight: 500;
  line-height: 40px;
  color: #8f9599;
}

.reaction {
  position: absolute;
  left: 22px;
  top: 101px;
  display: flex;
  align-items: center;
  justify-content: center;
  width: 84px;
  height: 74px;
  border: 3px solid #0b1115;
  border-radius: 36px;
  background: #1f272a;
}

/* Bottom bar */
.composer {
  display: flex;
  align-items: flex-end;
  gap: 26px;
  padding: 0 26px 12px 25px;
}

.field {
  flex: 1;
  min-width: 0;
  display: flex;
  align-items: center;
  height: 131px;
  padding: 0 34px 0 37px;
  border-radius: 66px;
  background: #1f272a;
}

.caret {
  width: 6px;
  height: 68px;
  margin-left: 38px;
  margin-right: -6px;
  background: #25c063;
}

.field input {
  flex: 1;
  min-width: 0;
  padding: 0;
  border: none;
  outline: none;
  background: none;
  font-family: Roboto, sans-serif;
  font-size: 51px;
  line-height: 60px;
  color: #f5f8f7;
}

.field input::placeholder {
  color: #8a9295;
  opacity: 1;
}

.field button + button {
  margin-left: 88px;
}

.mic {
  display: flex;
  align-items: center;
  justify-content: center;
  width: 136px;
  height: 136px;
  margin-bottom: 2px;
  border-radius: 50%;
  background: #21c063;
}

/* Sits half outside the bottom right corner */
.launcher {
  position: fixed;
  right: -53px;
  bottom: -53px;
  display: flex;
  align-items: flex-start;
  width: 100px;
  height: 100px;
  padding: 15px;
  border-radius: 50%;
  background: #1677f5;
}
```
